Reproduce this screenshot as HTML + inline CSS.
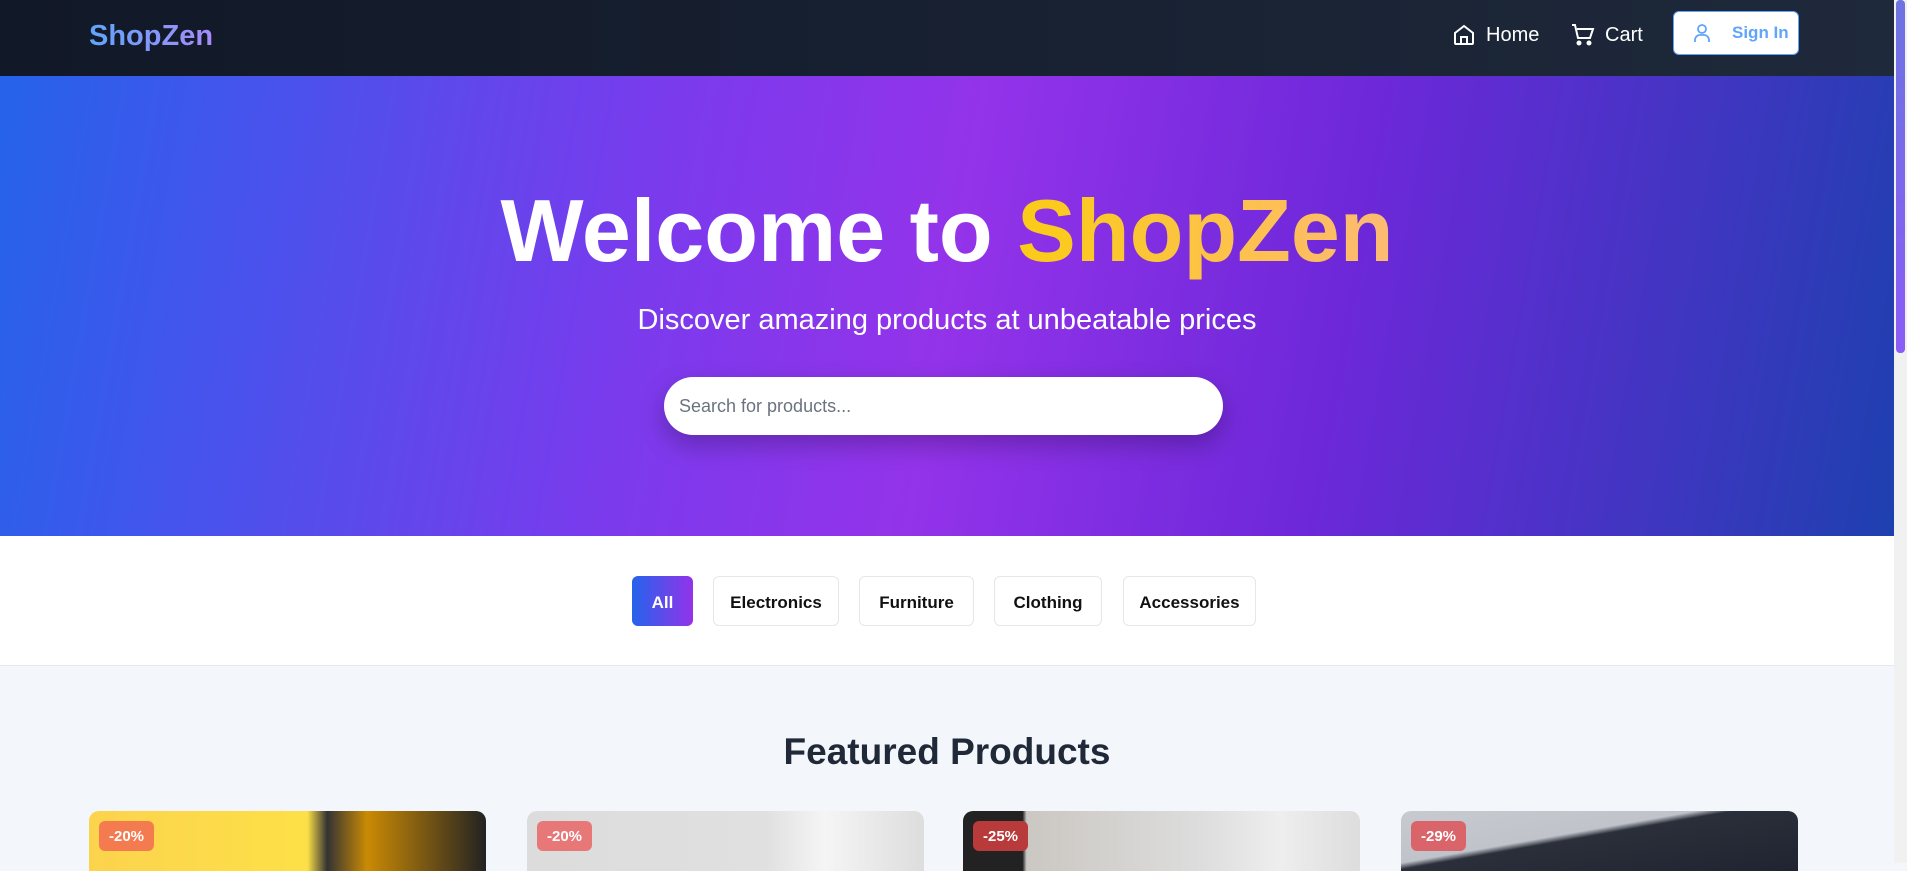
<!DOCTYPE html>
<html><head><meta charset="utf-8"><style>
*{margin:0;padding:0;box-sizing:border-box}
body{width:1907px;height:863px;overflow:hidden;font-family:"Liberation Sans",sans-serif;background:#f3f6fb;position:relative}
.nav{position:absolute;left:0;top:0;width:1894px;height:76px;background:linear-gradient(90deg,#111827,#1e293b)}
.logo{position:absolute;left:89px;top:20px;font-size:29px;font-weight:bold;background:linear-gradient(90deg,#60a5fa,#a78bfa);-webkit-background-clip:text;color:transparent}
.nl{position:absolute;top:23px;color:#fff;font-size:20px;display:flex;align-items:center;gap:10px;white-space:nowrap}
.signin{position:absolute;left:1673px;top:11px;width:126px;height:44px;background:#fff;border:1.5px solid #60a5fa;border-radius:6px;color:#60a5fa;font-weight:bold;font-size:17px;display:flex;align-items:center;padding-left:19px;gap:21px;white-space:nowrap}
.sb{position:absolute;left:1894px;top:0;width:13px;height:863px;background:#f1f1f1}
.sb div{width:9px;margin-left:2px;height:353px;background:linear-gradient(#6d74e0,#8b5cf6);border-radius:4px}
.hero{position:absolute;left:0;top:76px;width:1894px;height:460px;background:linear-gradient(100deg,#2563eb 0%,#7c3aed 35%,#9333ea 50%,#6d28d9 70%,#1e40af 100%);text-align:center;color:#fff}
.hero h1{position:absolute;width:100%;top:104px;font-size:88px;font-weight:bold}
.hero h1 span{background:linear-gradient(90deg,#facc15,#fdba74);-webkit-background-clip:text;color:transparent}
.hero p{position:absolute;width:100%;top:228px;font-size:29px}
.search{position:absolute;left:664px;top:301px;width:559px;height:58px;background:#fff;border-radius:29px;box-shadow:0 10px 25px rgba(0,0,0,.25);color:#6b7280;font-size:18px;text-align:left;padding:19px 0 0 15px}
.cats{position:absolute;left:0;top:536px;width:1894px;height:130px;background:#fff;border-bottom:1px solid #e5e7eb}
.c{position:absolute;top:40px;height:50px;border:1px solid #e5e7eb;border-radius:6px;font-size:17px;font-weight:bold;color:#111;display:flex;align-items:center;justify-content:center;background:#fff;padding-top:3px}
.c.a{background:linear-gradient(90deg,#2563eb,#9333ea);color:#fff;border:none}
h2{position:absolute;left:0;width:1894px;top:731px;text-align:center;font-size:37px;color:#1f2937}
.card{position:absolute;top:811px;width:397px;height:60px;border-radius:10px 10px 0 0;overflow:hidden}
.bd{position:absolute;left:10px;top:10px;width:55px;height:30px;border-radius:6px;color:#fff;font-size:15px;font-weight:bold;display:flex;align-items:center;justify-content:center}
</style></head><body>
<div class="nav">
<div class="logo">ShopZen</div>
<div class="nl" style="left:1452px"><svg width="24" height="24" viewBox="0 0 24 24" fill="none" stroke="#fff" stroke-width="2"><path d="M3 10l9-7 9 7v10a1 1 0 0 1-1 1H4a1 1 0 0 1-1-1z"/><path d="M9 21v-7h6v7"/></svg>Home</div>
<div class="nl" style="left:1571px"><svg width="24" height="24" viewBox="0 0 24 24" fill="none" stroke="#fff" stroke-width="2"><path d="M1 2h3l3 13h12l3-9H6"/><circle cx="8" cy="20" r="1.5" fill="#fff"/><circle cx="18" cy="20" r="1.5" fill="#fff"/></svg>Cart</div>
<div class="signin"><svg width="18" height="20" viewBox="0 0 18 20" fill="none" stroke="#60a5fa" stroke-width="1.8"><circle cx="9" cy="6" r="4"/><path d="M2 19v-2a5 5 0 0 1 5-5h4a5 5 0 0 1 5 5v2"/></svg>Sign In</div>
</div>
<div class="hero">
<h1>Welcome to <span>ShopZen</span></h1>
<p>Discover amazing products at unbeatable prices</p>
<div class="search">Search for products...</div>
</div>
<div class="cats">
<div class="c a" style="left:632px;width:61px">All</div>
<div class="c" style="left:713px;width:126px">Electronics</div>
<div class="c" style="left:859px;width:115px">Furniture</div>
<div class="c" style="left:994px;width:108px">Clothing</div>
<div class="c" style="left:1123px;width:133px">Accessories</div>
</div>
<h2>Featured Products</h2>
<div class="card" style="left:89px;background:linear-gradient(90deg,#fcd34d 0%,#fde047 55%,#333 60%,#ca8a04 70%,#222 100%)"><div class="bd" style="background:#f47b4f">-20%</div></div>
<div class="card" style="left:527px;background:linear-gradient(90deg,#dcdcdc,#e0e0e0 60%,#f5f5f5 75%,#ddd)"><div class="bd" style="background:#e87878">-20%</div></div>
<div class="card" style="left:963px;background:linear-gradient(90deg,#222 0%,#222 15%,#cbc7c2 16%,#ddd 60%,#eee 80%,#ddd 100%)"><div class="bd" style="background:#b83a3a">-25%</div></div>
<div class="card" style="left:1401px;background:linear-gradient(170deg,#c8cad0 0%,#c0c3ca 40%,#2a2f3a 45%,#1f2430 100%)"><div class="bd" style="background:#d9646a">-29%</div></div>
<div class="sb"><div></div></div>
</body></html>
